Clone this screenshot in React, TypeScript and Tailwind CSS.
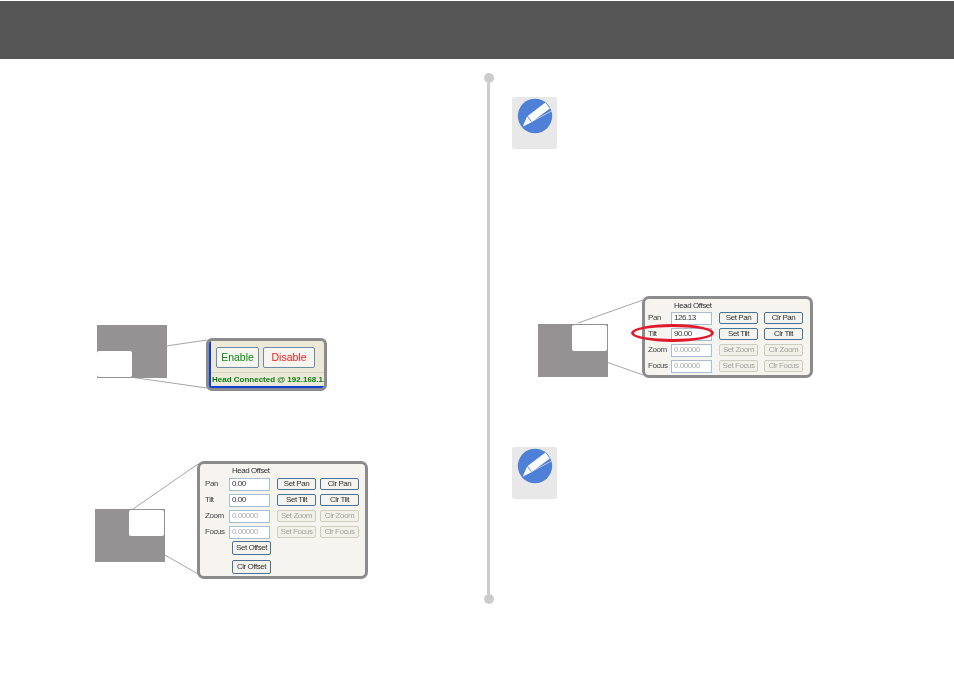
import * as React from "react";

const blueBtn = "border-[#4a7299] bg-[#f4f3ee] text-[#333]";
const offBtn = "border-[#cfcdc0] bg-[#f1f0e9] text-[#a5a49a]";
const smallText = "text-[8px] leading-none tracking-[-0.45px]";

function PanelButton({ label, disabled, className = "" }: { label: string; disabled?: boolean; className?: string }) {
  return (
    <div
      className={`flex h-[12px] w-[39px] items-center justify-center whitespace-nowrap rounded-[2px] border ${smallText} ${
        disabled ? offBtn : blueBtn
      } ${className}`}
    >
      {label}
    </div>
  );
}

function OffsetRow({
  label,
  value,
  disabled,
  tight,
}: {
  label: string;
  value: string;
  disabled?: boolean;
  tight?: boolean;
}) {
  return (
    <div className="flex h-[12px] items-center">
      <span className={`${tight ? "w-[23px]" : "w-[24px]"} whitespace-nowrap text-[#444] ${smallText}`}>{label}</span>
      <div
        className={`flex h-[13px] w-[41px] items-center border border-[#a9bdd0] bg-white pl-[2px] ${smallText} ${
          disabled ? "text-[#aaa]" : "text-[#333]"
        }`}
      >
        {value}
      </div>
      <PanelButton label={`Set ${label}`} disabled={disabled} className="ml-[7px]" />
      <PanelButton label={`Clr ${label}`} disabled={disabled} className={tight ? "ml-[6px]" : "ml-[4px]"} />
    </div>
  );
}

// grey page thumbnail with the white highlighted corner
function Thumb({ boxClass, className = "" }: { boxClass: string; className?: string }) {
  return (
    <div className={`relative h-[53px] w-[70px] shrink-0 bg-[#949293] ${className}`}>
      <div className={`absolute h-[26px] w-[35px] rounded-[2px] bg-white ${boxClass}`} />
    </div>
  );
}

function NoteIcon({ className = "" }: { className?: string }) {
  return (
    <div className={`flex h-[52px] w-[45px] justify-center rounded-[2px] bg-[#e8e8e8] pt-[1px] ${className}`}>
      <svg width="36" height="36" viewBox="0 0 36 36">
        <circle cx="18" cy="18" r="17.2" fill="#4f80d8" />
        <path d="M28.4 4.6 L32.8 10.4 L15 23.8 L10.6 18 Z" fill="#fff" />
        <path d="M10 18.6 L14.4 24.3 L6 28 Z" fill="#fff" />
        <path d="M6 28.2 L34.6 13" stroke="#fff" strokeWidth="0.6" fill="none" />
      </svg>
    </div>
  );
}

function Lines({ d, width, height }: { d: string; width: number; height: number }) {
  return (
    <svg className="absolute left-0 top-0" width={width} height={height} fill="none">
      <path d={d} stroke="#8d8d8d" strokeWidth="0.8" />
    </svg>
  );
}

export default function App() {
  return (
    <div className="flex h-[673px] w-[954px] flex-col overflow-hidden bg-white font-['Liberation_Sans',Arial,sans-serif]">
      <div className="mt-px h-[58px] shrink-0 bg-[#555555]" />

      <div className="flex min-h-0 flex-1">
        {/* left column */}
        <div className="w-[483px] shrink-0 pl-[95px]">
          {/* Enable / Disable figure */}
          <div className="relative ml-[2px] mt-[266px] flex h-[66px] w-[235px] items-start blur-[0.4px]">
            <Lines d="M35 26 L110 15 M33 52 L110 63" width={235} height={66} />
            <Thumb boxClass="left-0 bottom-[1px]" />
            <div className="absolute left-[109px] top-[13px] h-[53px] w-[121px] overflow-hidden rounded-[6px] border-[3px] border-[#8b8b8b] bg-[#ece9d8]">
              <div className="flex h-full flex-col border-b-2 border-l-2 border-[#0f3fd0]">
                <div className="flex gap-[4px] pl-[5px] pt-[6px]">
                  <div className="flex h-[21px] w-[43px] items-center justify-center rounded-[2px] border border-[#6d8ba6] bg-[#f6f5f0] text-[10.5px] text-[#0a8a12]">
                    Enable
                  </div>
                  <div className="flex h-[21px] w-[52px] items-center justify-center rounded-[2px] border border-[#6d8ba6] bg-[#f6f5f0] text-[10.5px] text-[#f01c1c]">
                    Disable
                  </div>
                </div>
                <div className="mt-[4px] whitespace-nowrap border-t border-[#d6d3c2] pl-[1px] pt-[2px] text-[8px] font-bold leading-[10px] text-[#0a7d12]">
                  Head Connected @ 192.168.1.
                </div>
              </div>
            </div>
          </div>

          {/* Head offset figure */}
          <div className="relative mt-[70px] flex h-[118px] w-[273px] items-start blur-[0.4px]">
            <Lines d="M38 48 L103 3 M35 74 L103 113" width={273} height={119} />
            <Thumb boxClass="right-[1px] top-[1px]" className="mt-[48px]" />
            <div className="absolute left-[102px] top-0 h-[118px] w-[171px] rounded-[7px] border-[3px] border-[#8b8b8b] bg-[#f5f4ef] pl-[5px]">
              <div className={`ml-[27px] pt-[3px] text-[#333] ${smallText}`}>Head Offset</div>
              <div className="mt-[3px] flex flex-col gap-[4px]">
                <OffsetRow label="Pan" value="0.00" />
                <OffsetRow label="Tilt" value="0.00" />
                <OffsetRow label="Zoom" value="0.00000" disabled />
                <OffsetRow label="Focus" value="0.00000" disabled />
              </div>
              <PanelButton label="Set Offset" className="ml-[27px] mt-[3px] h-[14px]" />
              <PanelButton label="Clr Offset" className="ml-[27px] mt-[5px] h-[14px]" />
            </div>
          </div>
        </div>

        {/* divider */}
        <div className="flex w-[29px] shrink-0 flex-col items-start pl-[1px] pt-[14px]">
          <div className="h-[10px] w-[10px] rounded-full bg-[#cccccc]" />
          <div className="ml-[3px] h-[511px] w-[3px] bg-[#cccccc]" />
          <div className="h-[10px] w-[10px] rounded-full bg-[#cccccc]" />
        </div>

        {/* right column */}
        <div className="flex-1">
          <NoteIcon className="mt-[38px]" />
          <div className="relative ml-[26px] mt-[147px] flex h-[83px] w-[275px] items-start blur-[0.4px]">
            <Lines d="M40 27 L105 4 M35 54 L105 79" width={275} height={83} />
            <Thumb boxClass="right-[1px] top-[1px]" className="mt-[28px]" />
            <div className="absolute left-[104px] top-0 h-[82px] w-[171px] rounded-[7px] border-[3px] border-[#8b8b8b] bg-[#f5f4ef] pl-[3px]">
              <div className={`ml-[26px] pt-[3px] text-[#333] ${smallText}`}>Head Offset</div>
              <div className="mt-[2px] flex flex-col gap-[4px]">
                <OffsetRow tight label="Pan" value="126.13" />
                <OffsetRow tight label="Tilt" value="90.00" />
                <OffsetRow tight label="Zoom" value="0.00000" disabled />
                <OffsetRow tight label="Focus" value="0.00000" disabled />
              </div>
            </div>
            {/* red marker round the Tilt row */}
            <div className="absolute left-[93px] top-[28px] h-[18px] w-[83px] rounded-[50%] border-[3px] border-[#e2182b]" />
          </div>
          <NoteIcon className="mt-[68px]" />
        </div>
      </div>
    </div>
  );
}
